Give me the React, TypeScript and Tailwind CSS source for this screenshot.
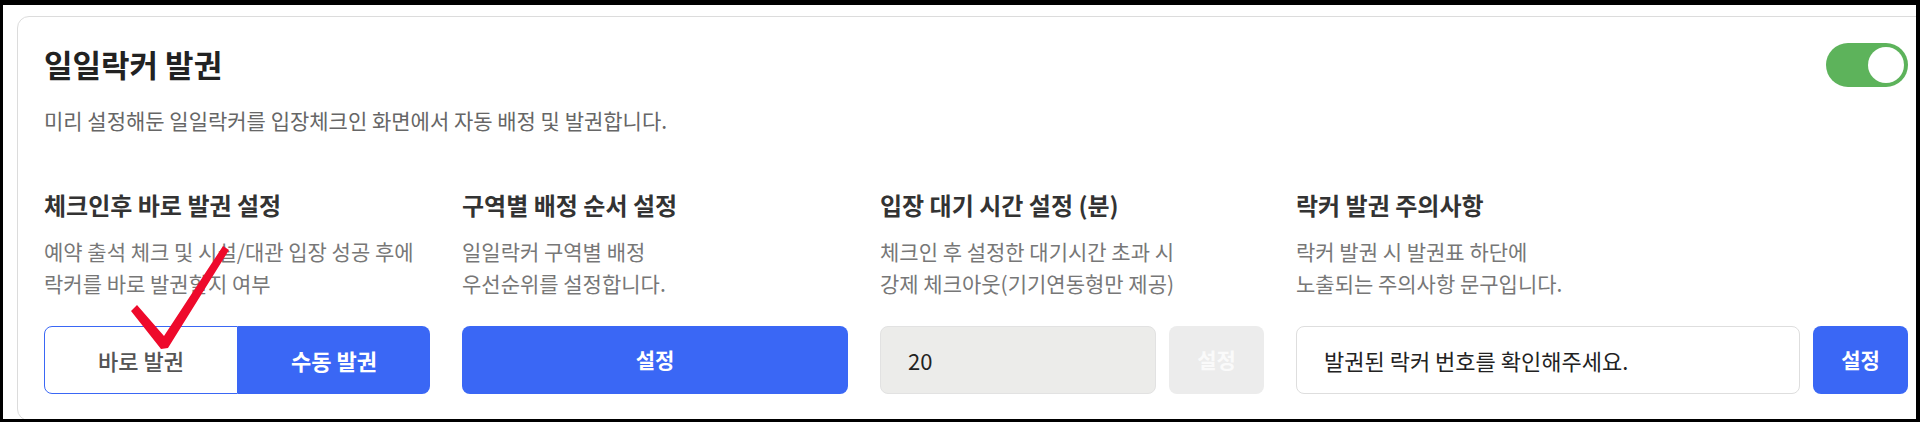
const font = { fontFamily: '"Noto Sans CJK KR", "Noto Sans", sans-serif' };

function Toggle() {
  return (
    <div className="flex h-[44px] w-[82px] items-center justify-end rounded-full bg-[#5db35b] pr-[4px]">
      <div className="h-[36px] w-[36px] rounded-full bg-white" />
    </div>
  );
}

function ColumnHead({ title, lines }: { title: string; lines: string[] }) {
  return (
    <div>
      <div className="text-[24px] font-bold leading-[30px] text-[#333]">{title}</div>
      <div className="mt-[15px] text-[21px] leading-[32px] text-[#777]">
        {lines.map((l) => (
          <div key={l}>{l}</div>
        ))}
      </div>
    </div>
  );
}

export default function App() {
  return (
    <div className="relative h-[422px] w-[1920px] overflow-hidden bg-black" style={font}>
      <div className="ml-[3px] mt-[5px] h-[414px] w-[1913px] overflow-hidden bg-white">
        <div className="ml-[14px] mt-[11px] w-[1918px] rounded-[12px] border border-[#dcdcdc] p-[26px]">
          <div className="flex items-start justify-between">
            <div>
              <div className="text-[31px] font-bold leading-[42px] text-[#222]">일일락커 발권</div>
              <div className="mt-[20px] text-[21px] leading-[30px] text-[#666]">
                미리 설정해둔 일일락커를 입장체크인 화면에서 자동 배정 및 발권합니다.
              </div>
            </div>
            <Toggle />
          </div>

          <div className="mt-[55px] grid grid-cols-[386px_386px_384px_612px] gap-x-[32px]">
            <div>
              <ColumnHead
                title="체크인후 바로 발권 설정"
                lines={["예약 출석 체크 및 시설/대관 입장 성공 후에", "락커를 바로 발권할지 여부"]}
              />
              <div className="mt-[27px] flex h-[68px]">
                <button className="flex-1 rounded-l-[8px] border border-[#3a67f5] bg-white text-[22px] font-medium text-[#555]">
                  바로 발권
                </button>
                <button className="flex-1 rounded-r-[8px] bg-[#3a67f5] text-[22px] font-bold text-white">
                  수동 발권
                </button>
              </div>
            </div>

            <div>
              <ColumnHead
                title="구역별 배정 순서 설정"
                lines={["일일락커 구역별 배정", "우선순위를 설정합니다."]}
              />
              <button className="mt-[27px] h-[68px] w-full rounded-[8px] bg-[#3a67f5] text-[21px] font-bold text-white">
                설정
              </button>
            </div>

            <div>
              <ColumnHead
                title="입장 대기 시간 설정 (분)"
                lines={["체크인 후 설정한 대기시간 초과 시", "강제 체크아웃(기기연동형만 제공)"]}
              />
              <div className="mt-[27px] flex h-[68px] gap-[13px]">
                <div className="flex flex-1 items-center rounded-[8px] border border-[#e2e2e2] bg-[#ececea] pl-[27px] text-[22px] text-[#222]">
                  20
                </div>
                <button className="w-[95px] rounded-[8px] bg-[#ececec] text-[21px] font-bold text-[#fafafa]">
                  설정
                </button>
              </div>
            </div>

            <div>
              <ColumnHead
                title="락커 발권 주의사항"
                lines={["락커 발권 시 발권표 하단에", "노출되는 주의사항 문구입니다."]}
              />
              <div className="mt-[27px] flex h-[68px] gap-[13px]">
                <div className="flex flex-1 items-center rounded-[8px] border border-[#dedede] bg-white pl-[27px] text-[22px] text-[#222]">
                  발권된 락커 번호를 확인해주세요.
                </div>
                <button className="w-[95px] rounded-[8px] bg-[#3a67f5] text-[21px] font-bold text-white">
                  설정
                </button>
              </div>
            </div>
          </div>
        </div>
      </div>

      {/* red check mark drawn over the screenshot */}
      <svg className="pointer-events-none absolute left-0 top-0" width="1920" height="422" viewBox="0 0 1920 422">
        <polygon
          points="131,311 137,305 164,336 223,246 229,250 168,348 161,349"
          fill="#ee0a2b"
        />
      </svg>
    </div>
  );
}
